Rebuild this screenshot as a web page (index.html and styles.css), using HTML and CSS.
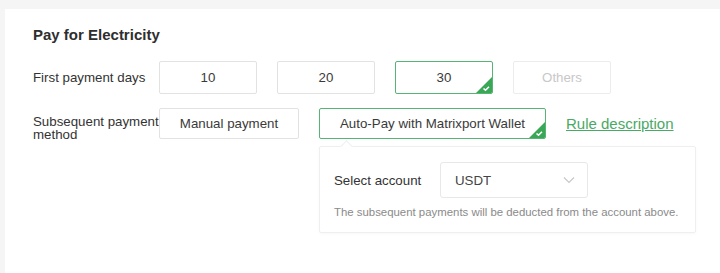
FILE: index.html
```html
<!DOCTYPE html>
<html lang="en">
<head>
    <meta charset="UTF-8">
    <meta name="viewport" content="width=device-width, initial-scale=1.0">
    <title>Pay for Electricity</title>
    <link rel="stylesheet" href="styles.css">
</head>
<body>
    <div class="card">
        <h2 class="title">Pay for Electricity</h2>

        <div class="row row-days">
            <div class="label">First payment days</div>
            <div class="options">
                <button class="opt opt-day">10</button>
                <button class="opt opt-day">20</button>
                <button class="opt opt-day active">30
                    <svg class="tick" width="16" height="16" viewBox="0 0 16 16"><polygon points="16,0 16,16 0,16" fill="#3aa757"/><polyline points="7.5,11.5 9.5,13.2 13,9.8" fill="none" stroke="#fff" stroke-width="1.6"/></svg>
                </button>
                <button class="opt opt-day muted">Others</button>
            </div>
        </div>

        <div class="row row-method">
            <div class="label label-two">Subsequent payment method</div>
            <div class="options">
                <button class="opt opt-manual">Manual payment</button>
                <button class="opt opt-auto active">Auto-Pay with Matrixport Wallet
                    <svg class="tick" width="16" height="16" viewBox="0 0 16 16"><polygon points="16,0 16,16 0,16" fill="#3aa757"/><polyline points="7.5,11.5 9.5,13.2 13,9.8" fill="none" stroke="#fff" stroke-width="1.6"/></svg>
                </button>
                <a class="rule-link" href="#">Rule description</a>
            </div>
        </div>

        <div class="popover">
            <div class="account-row">
                <div class="account-label">Select account</div>
                <div class="select">
                    <span>USDT</span>
                    <svg width="12" height="8" viewBox="0 0 12 8"><polyline points="1,1.5 6,6.5 11,1.5" fill="none" stroke="#c8c8c8" stroke-width="1.2"/></svg>
                </div>
            </div>
            <div class="note">The subsequent payments will be deducted from the account above.</div>
        </div>
    </div>
</body>
</html>
```

FILE: styles.css
```css
body {
    margin: 0;
    background-color: #f5f5f5;
    font-family: "Liberation Sans", Arial, sans-serif;
    color: #333;
}
.card {
    margin: 9px 0 0 5px;
    height: 264px;
    box-sizing: border-box;
    background-color: #fff;
    padding: 16px 28px 0 28px;
}
.title {
    margin: 0;
    font-size: 15px;
    line-height: 20px;
    font-weight: bold;
    color: #2e2e2e;
}
.row {
    display: flex;
    align-items: center;
}
.row-days {
    margin-top: 16px;
}
.row-method {
    margin-top: 14px;
    align-items: flex-start;
}
.label {
    width: 126px;
    font-size: 13.3px;
    color: #333;
}
.label-two {
    height: 31px;
    box-sizing: border-box;
    line-height: 13px;
    padding-top: 7px;
}
.options {
    display: flex;
    align-items: center;
    gap: 20px;
}
.opt {
    position: relative;
    box-sizing: border-box;
    height: 33px;
    padding: 0;
    border: 1px solid #e2e2e2;
    border-radius: 2px;
    background-color: #fff;
    font-family: inherit;
    font-size: 13.3px;
    color: #3a3a3a;
    cursor: pointer;
    overflow: hidden;
}
.opt-day {
    width: 98px;
}
.opt-manual {
    width: 140px;
    height: 31px;
}
.opt-auto {
    width: 227px;
    height: 31px;
}
.opt.active {
    border-color: #56b574;
}
.opt.muted {
    color: #c8c8c8;
    border-color: #ececec;
}
.tick {
    position: absolute;
    right: 0;
    bottom: 0;
}
.rule-link {
    font-size: 15px;
    color: #4aa965;
    text-decoration: underline;
}
/* 帳戶選擇彈出框 */
.popover {
    position: relative;
    margin: 7px 0 0 286px;
    width: 377px;
    box-sizing: border-box;
    border: 1px solid #efefef;
    border-radius: 2px;
    padding: 15px 8px 13px 14px;
    box-shadow: 0 1px 3px rgba(0, 0, 0, 0.03);
}
.popover::before {
    content: "";
    position: absolute;
    top: -5px;
    left: 22px;
    width: 8px;
    height: 8px;
    background-color: #fff;
    border-top: 1px solid #efefef;
    border-left: 1px solid #efefef;
    transform: rotate(45deg);
}
.account-row {
    display: flex;
    align-items: center;
}
.account-label {
    width: 106px;
    font-size: 13.3px;
    color: #333;
}
.select {
    display: flex;
    align-items: center;
    justify-content: space-between;
    box-sizing: border-box;
    width: 148px;
    height: 36px;
    padding: 0 12px 0 14px;
    border: 1px solid #e8e8e8;
    border-radius: 3px;
    font-size: 13.3px;
    color: #444;
}
.note {
    margin-top: 7px;
    font-size: 11.4px;
    line-height: 14px;
    color: #8a8a8a;
    white-space: nowrap;
}
```
